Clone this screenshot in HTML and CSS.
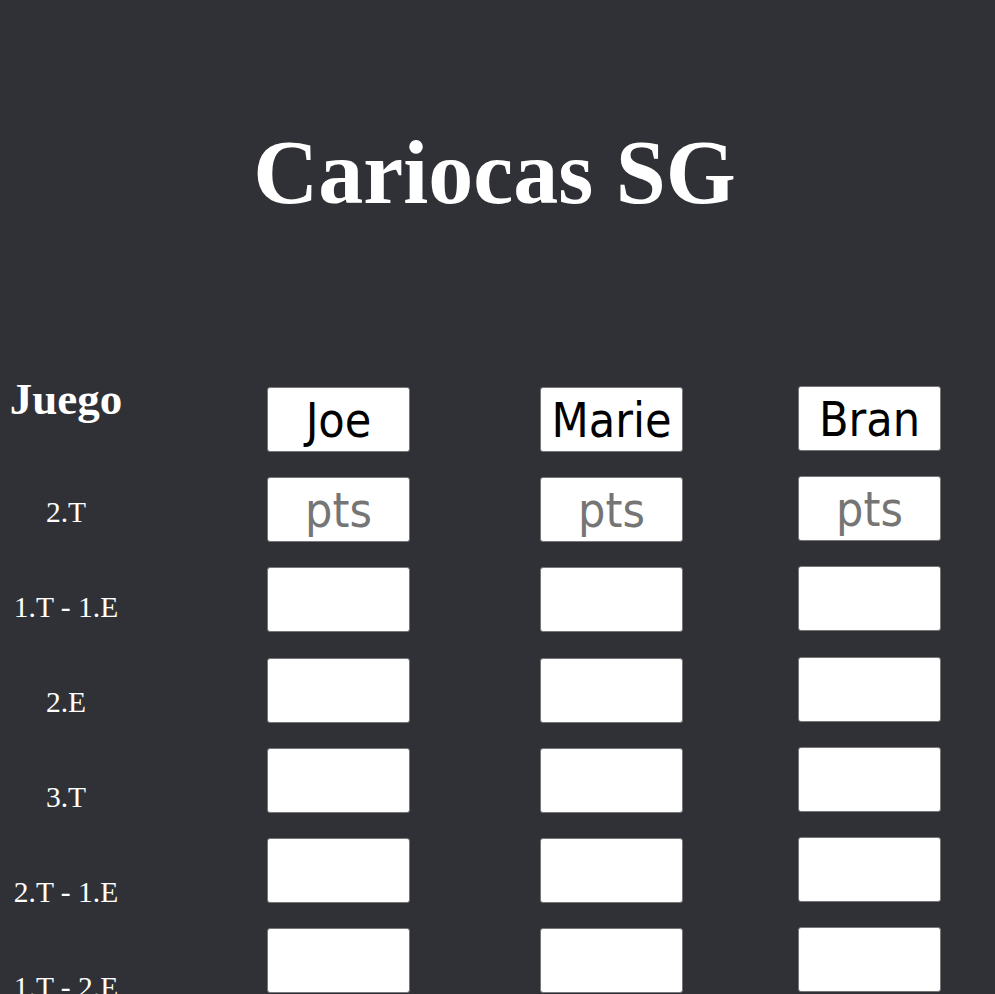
FILE: index.html
```html
<!DOCTYPE html>
<html lang="es">
<head>
<meta charset="utf-8">
<title>Cariocas SG</title>
<link rel="stylesheet" href="styles.css">
</head>
<body>
<h1 class="title">Cariocas SG</h1>
<main class="board">
  <div class="labels">
    <h2 class="labels-head">Juego</h2>
    <div class="label">2.T</div>
    <div class="label">1.T - 1.E</div>
    <div class="label">2.E</div>
    <div class="label">3.T</div>
    <div class="label">2.T - 1.E</div>
    <div class="label">1.T - 2.E</div>
  </div>
  <div class="player p1">
    <input class="box name" type="text" value="Joe">
    <input class="box" type="text" placeholder="pts">
    <input class="box" type="text">
    <input class="box" type="text">
    <input class="box" type="text">
    <input class="box" type="text">
    <input class="box" type="text">
  </div>
  <div class="player p2">
    <input class="box name" type="text" value="Marie">
    <input class="box" type="text" placeholder="pts">
    <input class="box" type="text">
    <input class="box" type="text">
    <input class="box" type="text">
    <input class="box" type="text">
    <input class="box" type="text">
  </div>
  <div class="player p3">
    <input class="box name" type="text" value="Bran">
    <input class="box" type="text" placeholder="pts">
    <input class="box" type="text">
    <input class="box" type="text">
    <input class="box" type="text">
    <input class="box" type="text">
    <input class="box" type="text">
  </div>
</main>
</body>
</html>
```
FILE: styles.css
```css
html, body {
  margin: 0;
  padding: 0;
  background: #303136;
  overflow: hidden;
}
body {
  font-family: "Liberation Serif", "Times New Roman", serif;
  color: #ffffff;
  height: 994px;
}
.title {
  margin: 123px 0 0 0;
  font-size: 90px;
  line-height: 100px;
  font-weight: bold;
  text-align: center;
  padding-right: 6px;
}
.board {
  display: flex;
  align-items: flex-start;
  margin-top: 151px;
}
.labels {
  width: 116px;
  margin-left: 8px;
  display: flex;
  flex-direction: column;
  align-items: center;
}
.labels-head {
  margin: 0 0 41px 0;
  font-size: 45px;
  line-height: 50px;
  font-weight: bold;
}
.label {
  font-size: 29.5px;
  line-height: 95px;
  height: 95px;
  white-space: nowrap;
}
.player {
  display: flex;
  flex-direction: column;
  gap: 25.2px;
  margin-top: 13px;
}
.p1 { margin-left: 143px; }
.p2 { margin-left: 130px; }
.p3 { margin-left: 115px; margin-top: 12px; }
.box {
  box-sizing: border-box;
  width: 143px;
  height: 65px;
  margin: 0;
  padding: 1px 2px;
  background: #ffffff;
  border: 1px solid #767676;
  border-radius: 3px;
  font-family: "DejaVu Sans Condensed", "DejaVu Sans", sans-serif;
  font-size: 48px;
  color: #000000;
  text-align: center;
  outline: none;
}
.box::placeholder {
  color: #757575;
  opacity: 1;
}
```
